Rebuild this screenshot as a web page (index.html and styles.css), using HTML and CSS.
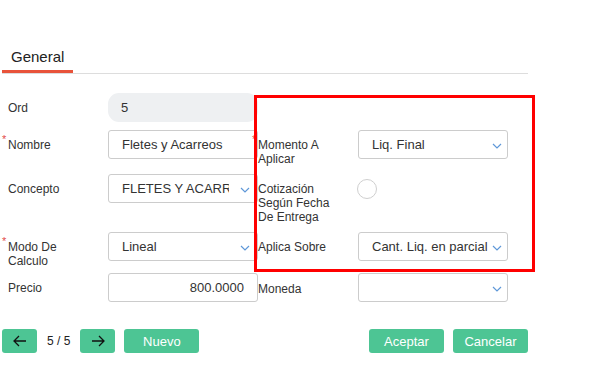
FILE: index.html
```html
<!DOCTYPE html>
<html lang="es">
<head>
<meta charset="utf-8">
<title>General</title>
<link rel="stylesheet" href="styles.css">
</head>
<body>
<div class="page">
  <div class="tabs">
    <div class="tab">General</div>
  </div>

  <div class="form">
    <div class="label left"><span class="txt">Ord</span></div>
    <div class="field pill">5</div>
    <div class="label"></div>
    <div></div>

    <div class="label left"><span class="txt req">Nombre</span></div>
    <div class="field input">Fletes y Acarreos</div>
    <div class="label"><span class="txt req">Momento A<br>Aplicar</span></div>
    <div class="field input select"><span class="val">Liq. Final</span><svg class="chev" viewBox="0 0 10 6"><path d="M1 1 L5 5 L9 1"/></svg></div>

    <div class="label left"><span class="txt">Concepto</span></div>
    <div class="field input select wide"><span class="val clip">FLETES Y ACARREOS</span><svg class="chev" viewBox="0 0 10 6"><path d="M1 1 L5 5 L9 1"/></svg></div>
    <div class="label"><span class="txt">Cotización<br>Según Fecha<br>De Entrega</span></div>
    <div class="radio-cell"><span class="radio"></span></div>

    <div class="label left"><span class="txt req">Modo De<br>Calculo</span></div>
    <div class="field input select wide"><span class="val">Lineal</span><svg class="chev" viewBox="0 0 10 6"><path d="M1 1 L5 5 L9 1"/></svg></div>
    <div class="label"><span class="txt">Aplica Sobre</span></div>
    <div class="field input select"><span class="val">Cant. Liq. en parcial</span><svg class="chev" viewBox="0 0 10 6"><path d="M1 1 L5 5 L9 1"/></svg></div>

    <div class="label left"><span class="txt">Precio</span></div>
    <div class="field input right">800.0000</div>
    <div class="label"><span class="txt moneda-l">Moneda</span></div>
    <div class="field input select moneda"><span class="val"></span><svg class="chev" viewBox="0 0 10 6"><path d="M1 1 L5 5 L9 1"/></svg></div>
  </div>

  <div class="actions">
    <div class="group">
      <button class="btn icon" type="button"><svg viewBox="0 0 14 12"><path d="M13 6 H1.5 M6 1 L1 6 L6 11"/></svg></button>
      <span class="count">5 / 5</span>
      <button class="btn icon" type="button"><svg viewBox="0 0 14 12"><path d="M1 6 H12.5 M8 1 L13 6 L8 11"/></svg></button>
      <button class="btn" type="button">Nuevo</button>
    </div>
    <div class="group">
      <button class="btn" type="button">Aceptar</button>
      <button class="btn" type="button">Cancelar</button>
    </div>
  </div>

  <div class="highlight"></div>
</div>
</body>
</html>
```

FILE: styles.css
```css
* { box-sizing: border-box; }
html, body { margin: 0; padding: 0; background: #fff; }
body {
  font-family: "Liberation Sans", Arial, sans-serif;
  color: #333;
  width: 609px;
  height: 370px;
  overflow: hidden;
}
.page {
  position: relative;
  margin-left: 2px;
  width: 526px;
  padding-top: 40px;
}
.tabs {
  display: flex;
  border-bottom: 1px solid #ddd;
}
.tab {
  font-size: 15px;
  line-height: 17px;
  color: #222;
  padding: 8px 9px 5px;
  border-bottom: 3px solid #e8533a;
}
.form {
  margin-top: 19px;
  display: grid;
  grid-template-columns: 106px 150px 100px 150px;
  grid-template-rows: 29px 36px 50px 33px 29px;
  row-gap: 8px;
  font-size: 12px;
}
.label {
  padding-top: 8px;
  line-height: 14px;
  color: #333;
}
.label.left { padding-left: 6px; }
.txt { position: relative; display: inline-block; }
.txt.moneda-l { top: 1px; }
.txt.req::before {
  content: "*";
  position: absolute;
  left: -6px;
  top: -6px;
  color: #e24b4b;
  font-size: 11px;
}
.field {
  height: 29px;
  font-size: 13px;
  line-height: 28px;
  padding: 0 13px;
  color: #333;
  white-space: nowrap;
  overflow: hidden;
}
.pill {
  background: #eef0f2;
  border-radius: 11px;
  line-height: 30px;
}
.input {
  border: 1px solid #ccc;
  border-radius: 3px;
  background: #fff;
}
.right { text-align: right; }
.select {
  display: flex;
  align-items: center;
  padding-right: 5px;
}
.select.wide { padding-right: 7px; }
.select .val {
  flex: 1;
  min-width: 0;
  overflow: hidden;
  white-space: nowrap;
  margin-right: 4px;
}
.select .val.clip {
  flex: none;
  width: 107px;
  margin-right: auto;
}
.chev {
  width: 10px;
  height: 6px;
  flex: none;
  margin-top: 3px;
  fill: none;
  stroke: #5f98d8;
  stroke-width: 1.2;
}
.radio-cell { padding-top: 5px; }
.radio {
  display: block;
  width: 20px;
  height: 20px;
  margin-left: -1px;
  border: 1px solid #cfcfcf;
  border-radius: 50%;
  background: #fff;
}
.actions {
  margin-top: 27px;
  display: flex;
  justify-content: space-between;
  align-items: center;
}
.group {
  display: flex;
  align-items: center;
  gap: 9px;
}
.btn {
  height: 24px;
  width: 75px;
  border: 0;
  border-radius: 3px;
  background: #4dc594;
  color: #fff;
  font-family: "Liberation Sans", Arial, sans-serif;
  font-size: 13px;
  padding: 0;
  display: flex;
  align-items: center;
  justify-content: center;
}
.btn.icon { width: 35px; }
.btn.icon svg {
  width: 14px;
  height: 12px;
  fill: none;
  stroke: #111;
  stroke-width: 1.3;
}
.count {
  font-size: 12px;
  color: #222;
  margin: 0 1px;
}
.highlight {
  position: absolute;
  left: 252px;
  top: 95px;
  width: 281px;
  height: 177px;
  border: 3px solid #ff0000;
  pointer-events: none;
}
```
